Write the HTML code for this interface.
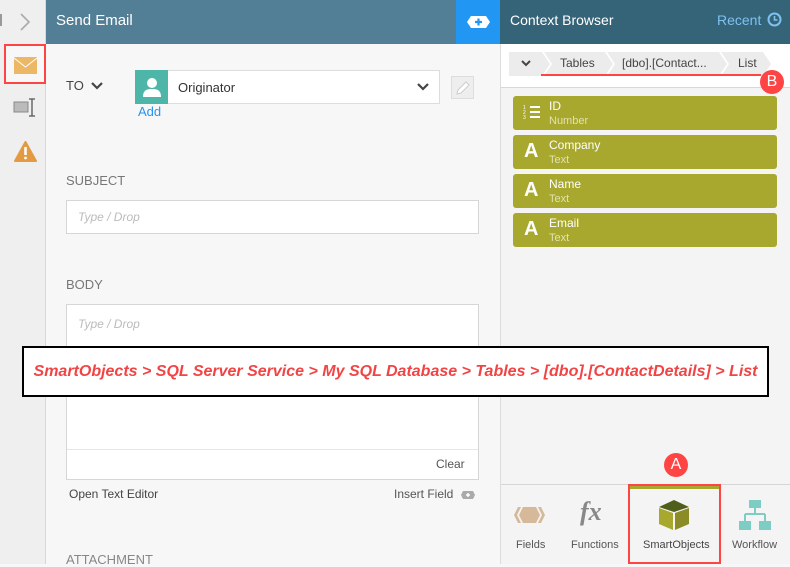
<!DOCTYPE html>
<html><head><meta charset="utf-8"><style>
*{box-sizing:border-box;margin:0;padding:0}
body{width:790px;height:564px;overflow:hidden;position:relative;font-family:"Liberation Sans",sans-serif;background:#f7f7f7}
.a{position:absolute}
</style></head><body>
<div class="a" style="left:0;top:0;width:46px;height:564px;background:#efefef;border-right:1px solid #d8d8d8"></div>
<div class="a" style="left:0;top:14px;width:2px;height:12px;background:#999"></div>
<svg class="a" style="left:18px;top:12px" width="14" height="20"><path d="M3 2 L11 10 L3 18" fill="none" stroke="#aaa" stroke-width="1.6"/></svg>
<div class="a" style="left:4px;top:44px;width:42px;height:40px;border:2px solid #f44;background:#f7f7f7"></div>
<svg class="a" style="left:14px;top:57px" width="24" height="18"><rect x="0" y="0" width="23" height="17" fill="#edb866"/><path d="M0 1 L11.5 10 L23 1" fill="none" stroke="#fff" stroke-width="1"/></svg>
<svg class="a" style="left:13px;top:98px" width="24" height="20"><rect x="1" y="4" width="14" height="10" fill="#bbb" stroke="#888"/><path d="M16 1h6M19 1v17M16 18h6" stroke="#555" stroke-width="1.3" fill="none"/></svg>
<svg class="a" style="left:14px;top:141px" width="23" height="21"><path d="M11.5 1 L22 20 H1 Z" fill="#e39a40" stroke="#e39a40" stroke-linejoin="round" stroke-width="2"/><rect x="10.2" y="6" width="2.6" height="8" fill="#fff"/><circle cx="11.5" cy="17" r="1.4" fill="#fff"/></svg>
<div class="a" style="left:46px;top:0;width:410px;height:44px;background:#527e96;color:#fff;font-size:15px;padding:12px 10px">Send Email</div>
<div class="a" style="left:456px;top:0;width:44px;height:44px;background:#2196f3"></div>
<svg class="a" style="left:466px;top:15px" width="25" height="14"><path d="M5 1H20L24 7L20 13H5L1 7Z" fill="#fff"/><path d="M12.5 3.5v7M9 7h7" stroke="#2196f3" stroke-width="2.2"/></svg>
<div class="a" style="left:66px;top:78px;font-size:13px;color:#444">TO</div>
<svg class="a" style="left:90px;top:81px" width="14" height="10"><path d="M2 2L7 7L12 2" fill="none" stroke="#444" stroke-width="2.2"/></svg>
<div class="a" style="left:135px;top:70px;width:305px;height:34px;background:#fff;border:1px solid #ddd"></div>
<div class="a" style="left:135px;top:70px;width:33px;height:34px;background:#4db6a9"></div>
<svg class="a" style="left:141px;top:75px" width="22" height="24"><circle cx="11" cy="8" r="5" fill="#fff"/><path d="M2 22C2 15 6 14 11 14S20 15 20 22Z" fill="#fff"/></svg>
<div class="a" style="left:178px;top:80px;font-size:13px;color:#333">Originator</div>
<svg class="a" style="left:416px;top:82px" width="14" height="10"><path d="M2 2L7 7L12 2" fill="none" stroke="#444" stroke-width="2.2"/></svg>
<div class="a" style="left:451px;top:76px;width:23px;height:23px;background:#eee;border:1px solid #ddd"></div>
<svg class="a" style="left:455px;top:80px" width="16" height="16"><path d="M2 14L3 10L11 2L14 5L6 13Z" fill="#fff" stroke="#ccc"/></svg>
<div class="a" style="left:138px;top:104px;font-size:13px;color:#2196f3">Add</div>
<div class="a" style="left:66px;top:173px;font-size:13px;color:#777">SUBJECT</div>
<div class="a" style="left:66px;top:200px;width:413px;height:34px;background:#fff;border:1px solid #d6d6d6;padding:9px 11px;font-size:12px;color:#bbb;font-style:italic">Type / Drop</div>
<div class="a" style="left:66px;top:277px;font-size:13px;color:#777">BODY</div>
<div class="a" style="left:66px;top:304px;width:413px;height:176px;background:#fff;border:1px solid #d6d6d6;padding:12px 11px;font-size:12px;color:#bbb;font-style:italic">Type / Drop</div>
<div class="a" style="left:67px;top:449px;width:411px;height:1px;background:#e6e6e6"></div>
<div class="a" style="left:436px;top:457px;font-size:12px;color:#555">Clear</div>
<div class="a" style="left:69px;top:487px;font-size:12px;color:#444">Open Text Editor</div>
<div class="a" style="left:394px;top:487px;font-size:12px;color:#555">Insert Field</div>
<svg class="a" style="left:460px;top:490px" width="16" height="10"><path d="M3 1H13L15 5L13 9H3L1 5Z" fill="#aaa"/><path d="M8 3v4M6 5h4" stroke="#fff" stroke-width="1.4"/></svg>
<div class="a" style="left:66px;top:552px;font-size:13px;color:#888">ATTACHMENT</div>
<div class="a" style="left:500px;top:0;width:290px;height:564px;background:#f4f4f4;border-left:1px solid #ddd"></div>
<div class="a" style="left:500px;top:0;width:290px;height:44px;background:#356479;color:#fff;font-size:14px;padding:12px 10px">Context Browser</div>
<div class="a" style="left:717px;top:12px;font-size:14px;color:#7ec0ee">Recent</div>
<svg class="a" style="left:767px;top:12px" width="15" height="15"><circle cx="7.5" cy="7.5" r="6" fill="none" stroke="#7ec0ee" stroke-width="2"/><path d="M7.5 4v4h3" fill="none" stroke="#7ec0ee" stroke-width="1.6"/></svg>
<div class="a" style="left:501px;top:44px;width:289px;height:44px;background:#fff;border-bottom:1px solid #d8d8d8"></div>
<svg class="a" style="left:509px;top:51px" width="264" height="26"><path d="M0 1H33L41 13L33 25H0Z" fill="#ececec"/><path d="M35 1H96L104 13L96 25H35L43 13Z" fill="#ececec"/><path d="M98 1H210L218 13L210 25H98L106 13Z" fill="#ececec"/><path d="M212 1H254L262 13L254 25H212L220 13Z" fill="#ececec"/><path d="M13 10L17 14L21 10" fill="none" stroke="#444" stroke-width="2"/></svg>
<div class="a" style="left:560px;top:56px;font-size:12px;color:#444">Tables</div>
<div class="a" style="left:622px;top:56px;font-size:12px;color:#444">[dbo].[Contact...</div>
<div class="a" style="left:738px;top:56px;font-size:12px;color:#444">List</div>
<div class="a" style="left:541px;top:74px;width:220px;height:2px;background:#f44"></div>
<div class="a" style="left:760px;top:70px;width:24px;height:24px;border-radius:50%;background:#f44;color:#fff;font-size:16px;text-align:center;line-height:24px">B</div>
<div class="a" style="left:513px;top:96px;width:264px;height:34px;background:#a8a82e;border-radius:3px"></div>
<div class="a" style="left:513px;top:135px;width:264px;height:34px;background:#a8a82e;border-radius:3px"></div>
<div class="a" style="left:513px;top:174px;width:264px;height:34px;background:#a8a82e;border-radius:3px"></div>
<div class="a" style="left:513px;top:213px;width:264px;height:34px;background:#a8a82e;border-radius:3px"></div>
<svg class="a" style="left:523px;top:104px" width="18" height="16"><path d="M7 3h10M7 8h10M7 13h10" stroke="#fff" stroke-width="2"/><text x="0" y="5" font-size="5" fill="#fff" font-family="Liberation Sans">1</text><text x="0" y="10" font-size="5" fill="#fff" font-family="Liberation Sans">2</text><text x="0" y="15" font-size="5" fill="#fff" font-family="Liberation Sans">3</text></svg>
<div class="a" style="left:524px;top:140px;font-size:20px;font-weight:bold;color:#fff">A</div>
<div class="a" style="left:524px;top:179px;font-size:20px;font-weight:bold;color:#fff">A</div>
<div class="a" style="left:524px;top:218px;font-size:20px;font-weight:bold;color:#fff">A</div>
<div class="a" style="left:549px;top:99px;font-size:12px;color:#fff;line-height:14px">ID<br><span style="font-size:11px;color:#e2e2b0">Number</span></div>
<div class="a" style="left:549px;top:138px;font-size:12px;color:#fff;line-height:14px">Company<br><span style="font-size:11px;color:#e2e2b0">Text</span></div>
<div class="a" style="left:549px;top:177px;font-size:12px;color:#fff;line-height:14px">Name<br><span style="font-size:11px;color:#e2e2b0">Text</span></div>
<div class="a" style="left:549px;top:216px;font-size:12px;color:#fff;line-height:14px">Email<br><span style="font-size:11px;color:#e2e2b0">Text</span></div>
<div class="a" style="left:501px;top:484px;width:289px;height:1px;background:#d6d6d6"></div>
<div class="a" style="left:664px;top:453px;width:24px;height:24px;border-radius:50%;background:#f44;color:#fff;font-size:16px;text-align:center;line-height:24px">A</div>
<svg class="a" style="left:513px;top:506px" width="33" height="18"><path d="M1 9L5 1H8L4 9L8 17H5Z M32 9L28 1H25L29 9L25 17H28Z M10 1H23L27 9L23 17H10L6 9Z" fill="#d5b998"/></svg>
<div class="a" style="left:516px;top:539px;font-size:11px;color:#555">Fields</div>
<div class="a" style="left:580px;top:497px;font-size:26px;font-style:italic;font-family:'Liberation Serif',serif;color:#888;font-weight:bold">fx</div>
<div class="a" style="left:571px;top:539px;font-size:11px;color:#555">Functions</div>
<div class="a" style="left:628px;top:484px;width:93px;height:80px;border:2px solid #f44"></div>
<div class="a" style="left:630px;top:486px;width:89px;height:3px;background:#a8a82e"></div>
<svg class="a" style="left:657px;top:499px" width="34" height="32"><path d="M17 1L32 8L17 13L2 8Z" fill="#4f5e1a"/><path d="M2 9L16 14V31L2 25Z" fill="#a8a82e"/><path d="M32 9L18 14V31L32 25Z" fill="#8c8c26"/></svg>
<div class="a" style="left:643px;top:539px;font-size:11px;color:#444">SmartObjects</div>
<svg class="a" style="left:739px;top:499px" width="32" height="32"><rect x="10" y="1" width="12" height="8" fill="#7ecdc4"/><path d="M16 9v6M6 15h20M6 15v7M26 15v7" stroke="#7ecdc4" stroke-width="2" fill="none"/><rect x="0" y="22" width="12" height="9" fill="#7ecdc4"/><rect x="20" y="22" width="12" height="9" fill="#7ecdc4"/></svg>
<div class="a" style="left:732px;top:539px;font-size:11px;color:#555">Workflow</div>
<div class="a" style="left:22px;top:346px;width:747px;height:51px;background:#fff;border:2px solid #000;color:#f24444;font-weight:bold;font-style:italic;font-size:16px;text-align:center;line-height:47px">SmartObjects &gt; SQL Server Service &gt; My SQL Database &gt; Tables &gt; [dbo].[ContactDetails] &gt; List</div>
</body></html>
